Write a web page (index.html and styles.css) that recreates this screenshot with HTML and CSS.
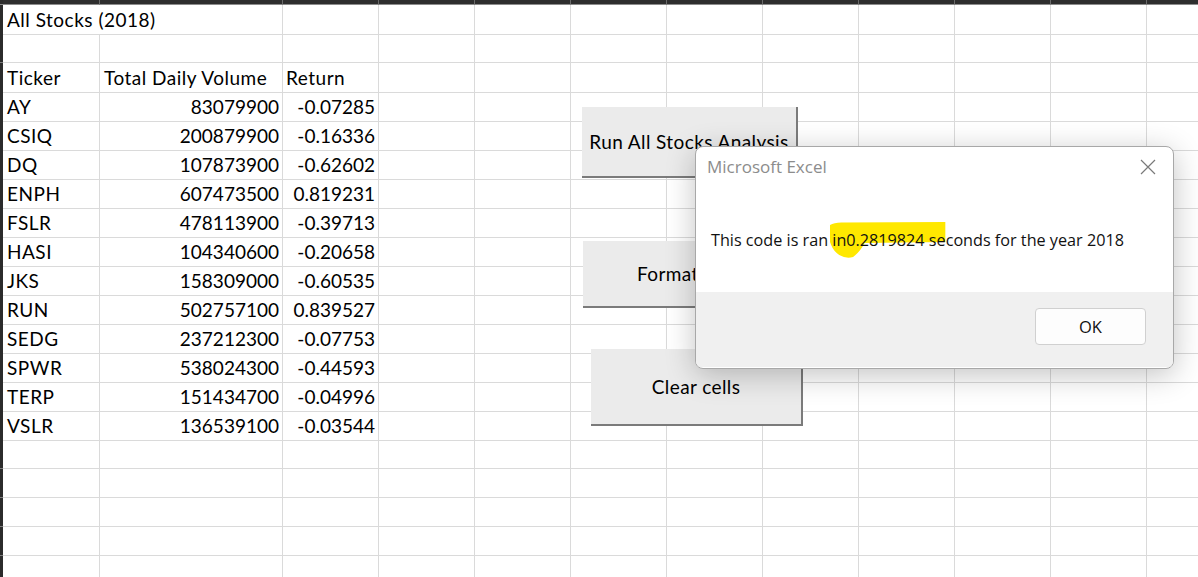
FILE: index.html
```html
<!DOCTYPE html>
<html lang="en">
<head>
<meta charset="utf-8">
<title>All Stocks (2018)</title>
<link rel="stylesheet" href="styles.css">
</head>
<body>
<div class="sheet">
  <div class="hdr"><i class="s"></i><i></i><i></i><i></i><i></i><i></i><i></i><i></i><i></i><i></i><i></i><i></i><i></i></div>

  <div class="row"><i class="s"></i><div class="c txt span2">All Stocks (2018)</div><div class="c"></div><div class="c"></div><div class="c"></div><div class="c"></div><div class="c"></div><div class="c"></div><div class="c"></div><div class="c"></div><div class="c"></div><div class="c"></div></div>
  <div class="row"><i class="s"></i><div class="c"></div><div class="c"></div><div class="c"></div><div class="c"></div><div class="c"></div><div class="c"></div><div class="c"></div><div class="c"></div><div class="c"></div><div class="c"></div><div class="c"></div><div class="c"></div></div>
  <div class="row"><i class="s"></i><div class="c txt">Ticker</div><div class="c txt">Total Daily Volume</div><div class="c txt hd">Return</div><div class="c"></div><div class="c"></div><div class="c"></div><div class="c"></div><div class="c"></div><div class="c"></div><div class="c"></div><div class="c"></div><div class="c"></div></div>
  <div class="row"><i class="s"></i><div class="c txt">AY</div><div class="c num">83079900</div><div class="c num">-0.07285</div><div class="c"></div><div class="c"></div><div class="c"></div><div class="c"></div><div class="c"></div><div class="c"></div><div class="c"></div><div class="c"></div><div class="c"></div></div>
  <div class="row"><i class="s"></i><div class="c txt">CSIQ</div><div class="c num">200879900</div><div class="c num">-0.16336</div><div class="c"></div><div class="c"></div><div class="c"></div><div class="c"></div><div class="c"></div><div class="c"></div><div class="c"></div><div class="c"></div><div class="c"></div></div>
  <div class="row"><i class="s"></i><div class="c txt">DQ</div><div class="c num">107873900</div><div class="c num">-0.62602</div><div class="c"></div><div class="c"></div><div class="c"></div><div class="c"></div><div class="c"></div><div class="c"></div><div class="c"></div><div class="c"></div><div class="c"></div></div>
  <div class="row"><i class="s"></i><div class="c txt">ENPH</div><div class="c num">607473500</div><div class="c num">0.819231</div><div class="c"></div><div class="c"></div><div class="c"></div><div class="c"></div><div class="c"></div><div class="c"></div><div class="c"></div><div class="c"></div><div class="c"></div></div>
  <div class="row"><i class="s"></i><div class="c txt">FSLR</div><div class="c num">478113900</div><div class="c num">-0.39713</div><div class="c"></div><div class="c"></div><div class="c"></div><div class="c"></div><div class="c"></div><div class="c"></div><div class="c"></div><div class="c"></div><div class="c"></div></div>
  <div class="row"><i class="s"></i><div class="c txt">HASI</div><div class="c num">104340600</div><div class="c num">-0.20658</div><div class="c"></div><div class="c"></div><div class="c"></div><div class="c"></div><div class="c"></div><div class="c"></div><div class="c"></div><div class="c"></div><div class="c"></div></div>
  <div class="row"><i class="s"></i><div class="c txt">JKS</div><div class="c num">158309000</div><div class="c num">-0.60535</div><div class="c"></div><div class="c"></div><div class="c"></div><div class="c"></div><div class="c"></div><div class="c"></div><div class="c"></div><div class="c"></div><div class="c"></div></div>
  <div class="row"><i class="s"></i><div class="c txt">RUN</div><div class="c num">502757100</div><div class="c num">0.839527</div><div class="c"></div><div class="c"></div><div class="c"></div><div class="c"></div><div class="c"></div><div class="c"></div><div class="c"></div><div class="c"></div><div class="c"></div></div>
  <div class="row"><i class="s"></i><div class="c txt">SEDG</div><div class="c num">237212300</div><div class="c num">-0.07753</div><div class="c"></div><div class="c"></div><div class="c"></div><div class="c"></div><div class="c"></div><div class="c"></div><div class="c"></div><div class="c"></div><div class="c"></div></div>
  <div class="row"><i class="s"></i><div class="c txt">SPWR</div><div class="c num">538024300</div><div class="c num">-0.44593</div><div class="c"></div><div class="c"></div><div class="c"></div><div class="c"></div><div class="c"></div><div class="c"></div><div class="c"></div><div class="c"></div><div class="c"></div></div>
  <div class="row"><i class="s"></i><div class="c txt">TERP</div><div class="c num">151434700</div><div class="c num">-0.04996</div><div class="c"></div><div class="c"></div><div class="c"></div><div class="c"></div><div class="c"></div><div class="c"></div><div class="c"></div><div class="c"></div><div class="c"></div></div>
  <div class="row"><i class="s"></i><div class="c txt">VSLR</div><div class="c num">136539100</div><div class="c num">-0.03544</div><div class="c"></div><div class="c"></div><div class="c"></div><div class="c"></div><div class="c"></div><div class="c"></div><div class="c"></div><div class="c"></div><div class="c"></div></div>
  <div class="row"><i class="s"></i><div class="c"></div><div class="c"></div><div class="c"></div><div class="c"></div><div class="c"></div><div class="c"></div><div class="c"></div><div class="c"></div><div class="c"></div><div class="c"></div><div class="c"></div><div class="c"></div></div>
  <div class="row"><i class="s"></i><div class="c"></div><div class="c"></div><div class="c"></div><div class="c"></div><div class="c"></div><div class="c"></div><div class="c"></div><div class="c"></div><div class="c"></div><div class="c"></div><div class="c"></div><div class="c"></div></div>
  <div class="row"><i class="s"></i><div class="c"></div><div class="c"></div><div class="c"></div><div class="c"></div><div class="c"></div><div class="c"></div><div class="c"></div><div class="c"></div><div class="c"></div><div class="c"></div><div class="c"></div><div class="c"></div></div>
  <div class="row"><i class="s"></i><div class="c"></div><div class="c"></div><div class="c"></div><div class="c"></div><div class="c"></div><div class="c"></div><div class="c"></div><div class="c"></div><div class="c"></div><div class="c"></div><div class="c"></div><div class="c"></div></div>
  <div class="row"><i class="s"></i><div class="c"></div><div class="c"></div><div class="c"></div><div class="c"></div><div class="c"></div><div class="c"></div><div class="c"></div><div class="c"></div><div class="c"></div><div class="c"></div><div class="c"></div><div class="c"></div></div>

  <button class="btn run" type="button">Run All Stocks Analysis</button>
  <button class="btn fmt" type="button">Format Table</button>
  <button class="btn clr" type="button">Clear cells</button>

  <div class="dlg" role="dialog">
    <div class="dlg-head">
      <span class="dlg-title">Microsoft Excel</span>
      <svg class="dlg-x" viewBox="0 0 16 16" width="16" height="16"><path d="M1 1 L15 15 M15 1 L1 15" stroke="#7a7a7a" stroke-width="1.2" fill="none"/></svg>
    </div>
    <div class="dlg-msg">This code is ran <span class="hl"><svg class="hl-mark" viewBox="0 0 100 36" preserveAspectRatio="none"><path d="M0,3 Q4,0 12,0.5 L100,0 L100,20 L30,21 Q26,30 20,35 Q14,37 8,33 Q3,29 1,23 L0,20 Z" fill="#ffe800"/></svg>in0.2819824 se</span>conds for the year 2018</div>
    <div class="dlg-foot"><button class="ok" type="button">OK</button></div>
  </div>
</div>
</body>
</html>
```

FILE: styles.css
```css
* { box-sizing: border-box; }

body {
  margin: 0;
  background: #fff;
  overflow: hidden;
  font-family: Lato, "Open Sans", sans-serif;
  color: #000;
}

.sheet {
  position: relative;
  width: 1198px;
  height: 577px;
  overflow: hidden;
}

.hdr,
.row {
  display: grid;
  grid-template-columns: 3px 97px 183px 96px repeat(9, 96px);
}

.hdr {
  height: 5px;
  background: #2e2e2e;
}

.hdr > i {
  display: block;
  border-right: 1px solid #6a6a6a;
  border-bottom: 1px solid #8c8c8c;
}

.hdr > i.s {
  border-right: 0;
}

.row {
  height: 29px;
}

.s {
  display: block;
  background: #2b2b2b;
  border-bottom: 1px solid #7c7c7c;
}

.c {
  border-right: 1px solid #dadada;
  border-bottom: 1px solid #dadada;
  font-size: 19px;
  line-height: 29px;
  white-space: nowrap;
  padding: 0 3px 0 4px;
}

.txt {
  letter-spacing: 0.5px;
}

.span2 {
  grid-column: span 2;
}

.num {
  text-align: right;
  padding-right: 3px;
}

.hd {
  padding-left: 3px;
}

.btn {
  position: absolute;
  margin: 0;
  padding: 0;
  border: 0;
  background: #ebebeb;
  border-right: 2px solid #7b7b7b;
  border-bottom: 2px solid #7b7b7b;
  display: flex;
  align-items: center;
  justify-content: center;
  font-family: Lato, "Open Sans", sans-serif;
  font-size: 19px;
  letter-spacing: 0.4px;
  color: #000;
  z-index: 2;
}

.run { left: 582px; top: 107px; width: 216px; height: 71px; }
.fmt { left: 583px; top: 241px; width: 216px; height: 67px; padding-left: 6px; }
.clr { left: 591px; top: 349px; width: 212px; height: 77px; }

.dlg {
  position: absolute;
  left: 695px;
  top: 146px;
  width: 479px;
  height: 223px;
  border: 1px solid #a8a8a8;
  border-radius: 8px;
  background: #fff;
  box-shadow: 0 6px 30px rgba(0, 0, 0, 0.24);
  overflow: hidden;
  font-family: "Open Sans", "Noto Sans", sans-serif;
  z-index: 5;
}

.dlg-head {
  height: 50px;
  display: flex;
  justify-content: space-between;
  align-items: flex-start;
  padding: 0 17px 0 11px;
}

.dlg-title {
  font-size: 17px;
  line-height: 24px;
  padding-top: 8px;
  color: #8c8c8c;
}

.dlg-x {
  margin-top: 12px;
  display: block;
}

.dlg-msg {
  height: 95px;
  padding: 31px 0 0 15px;
  font-size: 16.2px;
  line-height: 24px;
  color: #111;
  white-space: nowrap;
}

.hl {
  position: relative;
}

.hl-mark {
  position: absolute;
  left: -2px;
  top: -7px;
  width: calc(100% + 2px);
  height: 36px;
  z-index: -1;
}

.dlg-foot {
  height: 75px;
  background: #f0f0f0;
  display: flex;
  justify-content: flex-end;
  align-items: flex-start;
  padding: 16px 27px 0 0;
}

.ok {
  width: 111px;
  height: 37px;
  margin: 0;
  background: #fdfdfd;
  border: 1px solid #d0d0d0;
  border-radius: 4px;
  font-family: "Open Sans", "Noto Sans", sans-serif;
  font-size: 16.5px;
  color: #111;
}
```
